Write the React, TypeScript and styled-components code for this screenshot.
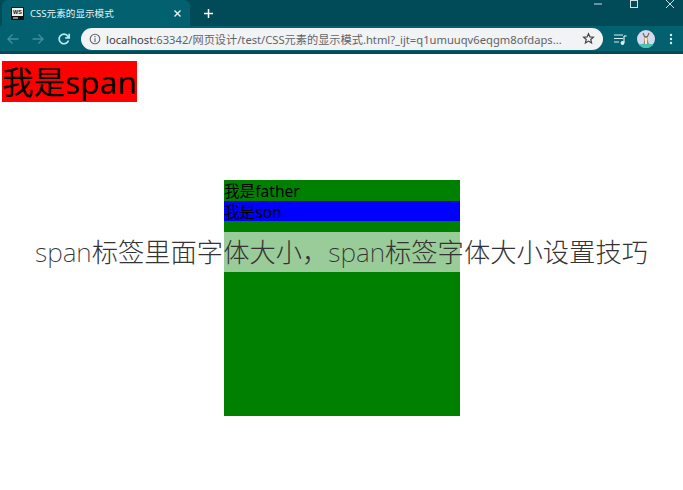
import React from "react";
import styled, { createGlobalStyle } from "styled-components";

const Global = createGlobalStyle`
  html, body { margin: 0; padding: 0; background: #fff; }
  body { font-family: "Noto Sans", "Noto Sans CJK SC", sans-serif; overflow: hidden; }
`;
const Frame = styled.div`width: 683px; height: 490px; position: relative; overflow: hidden; background: #fff;`;
const TabStrip = styled.div`height: 26px; background: #014a57; display: flex; align-items: flex-end; padding-left: 2px; position: relative;`;
const Tab = styled.div`width: 188px; height: 26px; background: #02606f; border-radius: 6px 6px 0 0; display: flex; align-items: center; padding: 0 8px 0 9px; box-sizing: border-box; color: #e6f3f5;`;
const TabTitle = styled.span`font: 9.6px "Noto Sans", "Noto Sans CJK SC", sans-serif; flex: 1; margin-left: 6px;`;
const NewTab = styled.div`width: 36px; display: flex; justify-content: center; align-items: center; height: 26px;`;
const WindowControls = styled.div`position: absolute; top: -2px; right: -5px; display: flex; height: 12px; align-items: center;`;
const WinBtn = styled.div`width: 36px; display: flex; justify-content: center;`;
const Toolbar = styled.div`height: 25px; background: #02606f; display: flex; align-items: center; box-sizing: border-box;`;
const NavBtn = styled.div`width: 25.5px; display: flex; justify-content: center; align-items: center;`;
const Omnibox = styled.div`width: 522px; height: 22px; margin-left: 4.5px; border-radius: 11px; background: #f1f3f4; display: flex; align-items: center; padding: 0 8px; box-sizing: border-box;`;
const Url = styled.div`font: 11.2px "Noto Sans", "Noto Sans CJK SC", sans-serif; color: #5f6368; margin-left: 5px; flex: 1; white-space: nowrap; overflow: hidden;`;
const Host = styled.span`color: #3c4043;`;
const ToolIcons = styled.div`display: flex; align-items: center; margin-left: 10px; gap: 10px;`;
const Dots = styled.svg`margin-left: 4px;`;
const Divider = styled.div`height: 3px; background: #014a57;`;
const Page = styled.div`padding: 7px 2px 0;`;
const Red = styled.span`background: #f00; color: #000; font-size: 31.5px; line-height: 41px; display: inline-block; height: 41px; vertical-align: top;`;
const Father = styled.div`width: 236px; height: 236px; box-sizing: border-box; padding-top: 1px; background: #008000; margin: 78px 0 0 222px; font-size: 15.6px; line-height: 20px; color: #000;`;
const Son = styled.div`background: #00f; height: 20px; line-height: 22px;`;
const CaptionBand = styled.div`position: absolute; left: 0; right: 0; top: 232px; height: 40px; background: rgba(255,255,255,0.6); text-align: center; white-space: nowrap; font: 200 26.3px/41px "Noto Sans", "Noto Sans CJK SC", sans-serif; color: #333;`;

export default function App() {
  return (
    <Frame>
      <Global />
      <TabStrip>
        <Tab>
          <svg width="13" height="13" viewBox="0 0 13 13"><rect width="13" height="13" fill="#111"/><rect x="1" y="1" width="11" height="8" fill="#eee"/><rect x="2" y="10.500" width="5" height="1" fill="#fff"/><text x="2" y="7" fontSize="5.500" fontWeight="700" fontFamily="Liberation Sans" fill="#111">WS</text></svg>
          <TabTitle>CSS元素的显示模式</TabTitle>
          <svg width="9" height="9" viewBox="0 0 9 9" stroke="#e6f3f5" strokeWidth="1.400"><path d="M1.500 1.500l6 6M7.500 1.500l-6 6"/></svg>
        </Tab>
        <NewTab>
          <svg width="11" height="11" viewBox="0 0 11 11" stroke="#fff" strokeWidth="1.500"><path d="M5.500 1v9M1 5.500h9"/></svg>
        </NewTab>
        <WindowControls>
          <WinBtn><svg width="10" height="10" viewBox="0 0 10 10" stroke="#cfe0e3"><path d="M1 5h8"/></svg></WinBtn>
          <WinBtn><svg width="10" height="10" viewBox="0 0 10 10" stroke="#cfe0e3" fill="none"><rect x="1.500" y="1.500" width="7" height="7"/></svg></WinBtn>
          <WinBtn><svg width="10" height="10" viewBox="0 0 10 10" stroke="#cfe0e3"><path d="M1 1l8 8M9 1l-8 8"/></svg></WinBtn>
        </WindowControls>
      </TabStrip>
      <Toolbar>
        <NavBtn><svg width="14" height="14" viewBox="0 0 14 14" fill="none" stroke="#3f8f9c" strokeWidth="1.400"><path d="M12.500 7H2M6.500 2.500L2 7l4.500 4.500"/></svg></NavBtn>
        <NavBtn><svg width="14" height="14" viewBox="0 0 14 14" fill="none" stroke="#3f8f9c" strokeWidth="1.400"><path d="M1.500 7H12M7.500 2.500L12 7l-4.500 4.500"/></svg></NavBtn>
        <NavBtn><svg width="14" height="14" viewBox="0 0 14 14" fill="none" stroke="#b8e6ea" strokeWidth="1.700"><path d="M11.500 8.500A4.800 4.800 0 1 1 10.400 3.600L12 5.500"/><path d="M12.200 1.800v4h-4"/></svg></NavBtn>
        <Omnibox>
          <svg width="12" height="12" viewBox="0 0 12 12" fill="none" stroke="#5f6368" strokeWidth="1.100"><circle cx="6" cy="6" r="4.800"/><path d="M6 5.200V9M6 3v1.200"/></svg>
          <Url><Host>localhost</Host>:63342/网页设计/test/CSS元素的显示模式.html?_ijt=q1umuuqv6eqgm8ofdaps...</Url>
          <svg width="13" height="13" viewBox="0 0 24 24" fill="none" stroke="#444" strokeWidth="2.200"><path d="M12 3l2.700 6 6.300.6-4.800 4.200 1.500 6.400L12 16.800 6.300 20.200l1.500-6.400L3 9.600 9.300 9z"/></svg>
        </Omnibox>
        <ToolIcons>
          <svg width="14" height="12" viewBox="0 0 14 12" fill="none" stroke="#d8eef0" strokeWidth="1.200"><path d="M1 2h9M1 5.500h9M1 9h5M11 3v7"/><path d="M11 3h2.500"/><circle cx="9.500" cy="10" r="1.300" fill="#d8eef0"/></svg>
          <svg width="18" height="18" viewBox="0 0 18 18"><circle cx="9" cy="9" r="9" fill="#d5d9ee"/><path d="M1.500 14a9 9 0 0 0 15 0z" fill="#45c4b4"/><path d="M6 3l1.500 3.500h3L12 3" stroke="#7a5c45" strokeWidth="1.100" fill="none"/><path d="M7.500 6.500h3v3l1.500 4.500H6.500l1-4.500z" fill="#a8835f"/><path d="M8 8h2v6H8z" fill="#f3ead8"/></svg>
          <Dots width="4" height="12" viewBox="0 0 4 12" fill="#d8eef0"><circle cx="2" cy="2" r="1.200"/><circle cx="2" cy="6" r="1.200"/><circle cx="2" cy="10" r="1.200"/></Dots>
        </ToolIcons>
      </Toolbar>
      <Divider />
      <Page>
        <Red>我是span</Red>
        <Father>
          我是father
          <Son>我是son</Son>
        </Father>
      </Page>
      <CaptionBand>span标签里面字体大小，span标签字体大小设置技巧</CaptionBand>
    </Frame>
  );
}
